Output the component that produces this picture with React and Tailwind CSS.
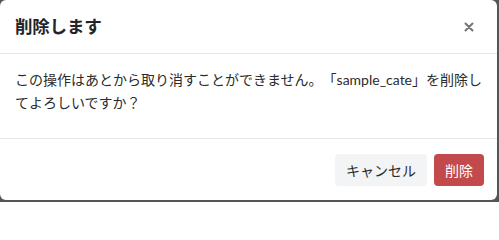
import React from "react"

function CloseIcon() {
    return (
        <svg width="10" height="10" viewBox="0 0 10 10" className="text-[#737373]">
            <path d="M1.5 1.5 L8.5 8.5 M8.5 1.5 L1.5 8.5" stroke="currentColor" strokeWidth="2" strokeLinecap="round" />
        </svg>
    )
}

export default function App() {
    return (
        <div className="w-[499px] h-[202px] bg-[#555555] font-['Lato','Noto_Sans_CJK_JP',sans-serif]">
            <div className="w-[497px] h-[200px] bg-white rounded-[6px] flex flex-col overflow-hidden">
                <header className="h-[54px] flex items-center justify-between pl-[15px] pr-[18px] border-b border-[#e6e6e6]">
                    <h5 className="text-[17.5px] font-bold text-[#212529] leading-none tracking-[-0.2px]">削除します</h5>
                    <button className="flex items-center justify-center w-5 h-5">
                        <CloseIcon />
                    </button>
                </header>

                <section className="h-[85px] px-[15px] pt-[15px] border-b border-[#e6e6e6]">
                    <p className="text-[14px] leading-[22.5px] text-[#2b2b2b] [text-spacing-trim:space-all]">
                        この操作はあとから取り消すことができません。「sample_cate」を削除してよろしいですか？
                    </p>
                </section>

                <footer className="flex-1 flex items-center justify-end gap-[7px] pr-[13px] pt-[1px]">
                    <button className="h-[32px] px-[11px] rounded-[4px] bg-[#f3f4f6] text-[14px] text-[#2b2b2b]">
                        キャンセル
                    </button>
                    <button className="h-[32px] px-[11px] rounded-[4px] bg-[#c24a4d] text-[14px] text-white">
                        削除
                    </button>
                </footer>
            </div>
        </div>
    )
}
